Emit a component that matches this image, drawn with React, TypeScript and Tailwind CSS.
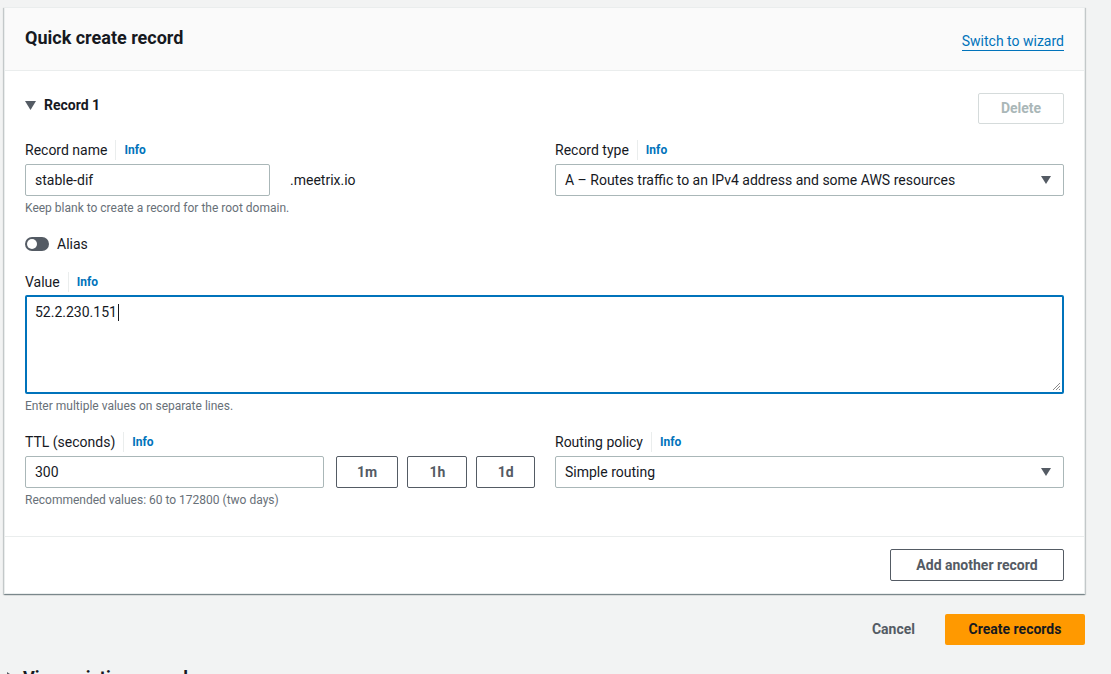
import React from 'react';

const font = { fontFamily: 'Roboto, "Liberation Sans", Arial, sans-serif' };

function Label({ text }: { text: string }) {
  return (
    <div className="flex h-[20px] items-center">
      <span className="text-[14px] text-[#16191f]">{text}</span>
      <span className="mx-[8px] h-[20px] w-px bg-[#eaeded]" />
      <span className="text-[12px] font-bold text-[#0073bb]">Info</span>
    </div>
  );
}

function Caret() {
  return (
    <svg width="10" height="8" viewBox="0 0 10 8" className="shrink-0">
      <path d="M0 0 H10 L5 8 Z" fill="#545b64" />
    </svg>
  );
}

function Select({ value }: { value: string }) {
  return (
    <div className="flex h-[32px] items-center justify-between rounded-[2px] border border-[#aab7b8] bg-white pl-[9px] pr-[12px] text-[14px] text-[#16191f]">
      <span>{value}</span>
      <Caret />
    </div>
  );
}

function Hint({ text }: { text: string }) {
  return <div className="mt-[4px] h-[16px] text-[12px] leading-[16px] text-[#687078]">{text}</div>;
}

function SmallButton({ text, w }: { text: string; w: string }) {
  return (
    <div
      className={`flex h-[32px] ${w} items-center justify-center rounded-[2px] border border-[#545b64] bg-white text-[14px] font-bold text-[#545b64]`}
    >
      {text}
    </div>
  );
}

export default function App() {
  return (
    <div className="min-h-[674px] overflow-hidden bg-[#f2f3f3] pt-[7px]" style={font}>
      {/* Card */}
      <div className="ml-[4px] w-[1081px] border border-[#eaeded] bg-white shadow-[0_1px_1px_0_rgba(0,28,36,0.3),1px_1px_1px_0_rgba(0,28,36,0.15),-1px_1px_1px_0_rgba(0,28,36,0.15)]">
        {/* Header */}
        <div className="flex h-[63px] items-center justify-between border-b border-[#eaeded] bg-[#fafafa] px-[20px]">
          <h2 className="mt-[-3px] text-[18px] font-bold text-[#16191f]">Quick create record</h2>
          <span className="mt-[5px] border-b border-[#0073bb] text-[14px] leading-[18px] text-[#0073bb]">
            Switch to wizard
          </span>
        </div>

        {/* Body */}
        <div className="px-[20px] pt-[22px]">
          <div className="flex items-start justify-between">
            <div className="mt-[2px] flex items-center gap-[8px]">
              <svg width="11" height="9" viewBox="0 0 11 9">
                <path d="M0 0 H11 L5.5 9 Z" fill="#545b64" />
              </svg>
              <span className="text-[14px] font-bold text-[#16191f]">Record 1</span>
            </div>
            <div className="flex h-[31px] w-[86px] items-center justify-center rounded-[2px] border border-[#d5dbdb] bg-white text-[14px] font-bold text-[#aab7b8]">
              Delete
            </div>
          </div>

          <div className="mt-[16px] grid grid-cols-[510px_509px] gap-x-[20px]">
            <div>
              <Label text="Record name" />
              <div className="mt-[4px] flex items-center">
                <div className="flex h-[32px] w-[245px] items-center rounded-[2px] border border-[#aab7b8] pl-[9px] text-[14px] text-[#16191f]">
                  stable-dif
                </div>
                <span className="ml-[20px] text-[14px] text-[#16191f]">.meetrix.io</span>
              </div>
              <Hint text="Keep blank to create a record for the root domain." />
            </div>
            <div>
              <Label text="Record type" />
              <div className="mt-[4px]">
                <Select value="A – Routes traffic to an IPv4 address and some AWS resources" />
              </div>
            </div>
          </div>

          {/* Alias toggle */}
          <div className="mt-[18px] flex h-[20px] items-center gap-[8px]">
            <div className="relative h-[14px] w-[24px] rounded-full bg-[#545b64]">
              <div className="absolute left-[2px] top-[2px] h-[10px] w-[10px] rounded-full bg-white" />
            </div>
            <span className="text-[14px] text-[#16191f]">Alias</span>
          </div>

          {/* Value */}
          <div className="mt-[18px]">
            <Label text="Value" />
            <div className="relative mt-[3px] h-[99px] rounded-[2px] border-2 border-[#0073bb] bg-white pl-[8px] pt-[5px] text-[14px] text-[#16191f]">
              <span className="inline-flex items-center">
                52.2.230.151
                <span className="ml-px inline-block h-[17px] w-px bg-[#16191f]" />
              </span>
              <svg width="9" height="9" viewBox="0 0 9 9" className="absolute bottom-[1px] right-[1px]">
                <path d="M8 1 L1 8 M8 4 L4 8 M8 7 L7 8" stroke="#8a8a8a" strokeWidth="1" />
              </svg>
            </div>
            <Hint text="Enter multiple values on separate lines." />
          </div>

          {/* TTL + routing */}
          <div className="mt-[18px] grid grid-cols-[510px_509px] gap-x-[20px]">
            <div>
              <Label text="TTL (seconds)" />
              <div className="mt-[4px] flex items-center gap-[9px]">
                <div className="mr-[3px] flex h-[32px] w-[300px] items-center rounded-[2px] border border-[#aab7b8] pl-[9px] text-[14px] text-[#16191f]">
                  300
                </div>
                <SmallButton text="1m" w="w-[63px]" />
                <SmallButton text="1h" w="w-[60px]" />
                <SmallButton text="1d" w="w-[59px]" />
              </div>
              <Hint text="Recommended values: 60 to 172800 (two days)" />
            </div>
            <div>
              <Label text="Routing policy" />
              <div className="mt-[4px]">
                <Select value="Simple routing" />
              </div>
            </div>
          </div>
        </div>

        {/* Footer */}
        <div className="mt-[28px] flex justify-end border-t border-[#eaeded] px-[20px] pb-[12px] pt-[12px]">
          <div className="flex h-[32px] w-[174px] items-center justify-center rounded-[2px] border border-[#545b64] bg-white text-[14px] font-bold text-[#545b64]">
            Add another record
          </div>
        </div>
      </div>

      {/* Actions */}
      <div className="ml-[4px] mt-[20px] flex w-[1081px] items-center justify-end gap-[30px]">
        <span className="text-[14px] font-bold text-[#545b64]">Cancel</span>
        <div className="flex h-[31px] w-[140px] items-center justify-center rounded-[2px] bg-[#ff9900] text-[14px] font-bold text-[#16191f]">
          Create records
        </div>
      </div>

      <div className="ml-[7px] mt-[19px] flex items-center gap-[8px]">
        <svg width="8" height="11" viewBox="0 0 8 11">
          <path d="M0 0 V11 L8 5.5 Z" fill="#545b64" />
        </svg>
        <span className="text-[18px] font-bold text-[#16191f]">View existing records</span>
      </div>
    </div>
  );
}
